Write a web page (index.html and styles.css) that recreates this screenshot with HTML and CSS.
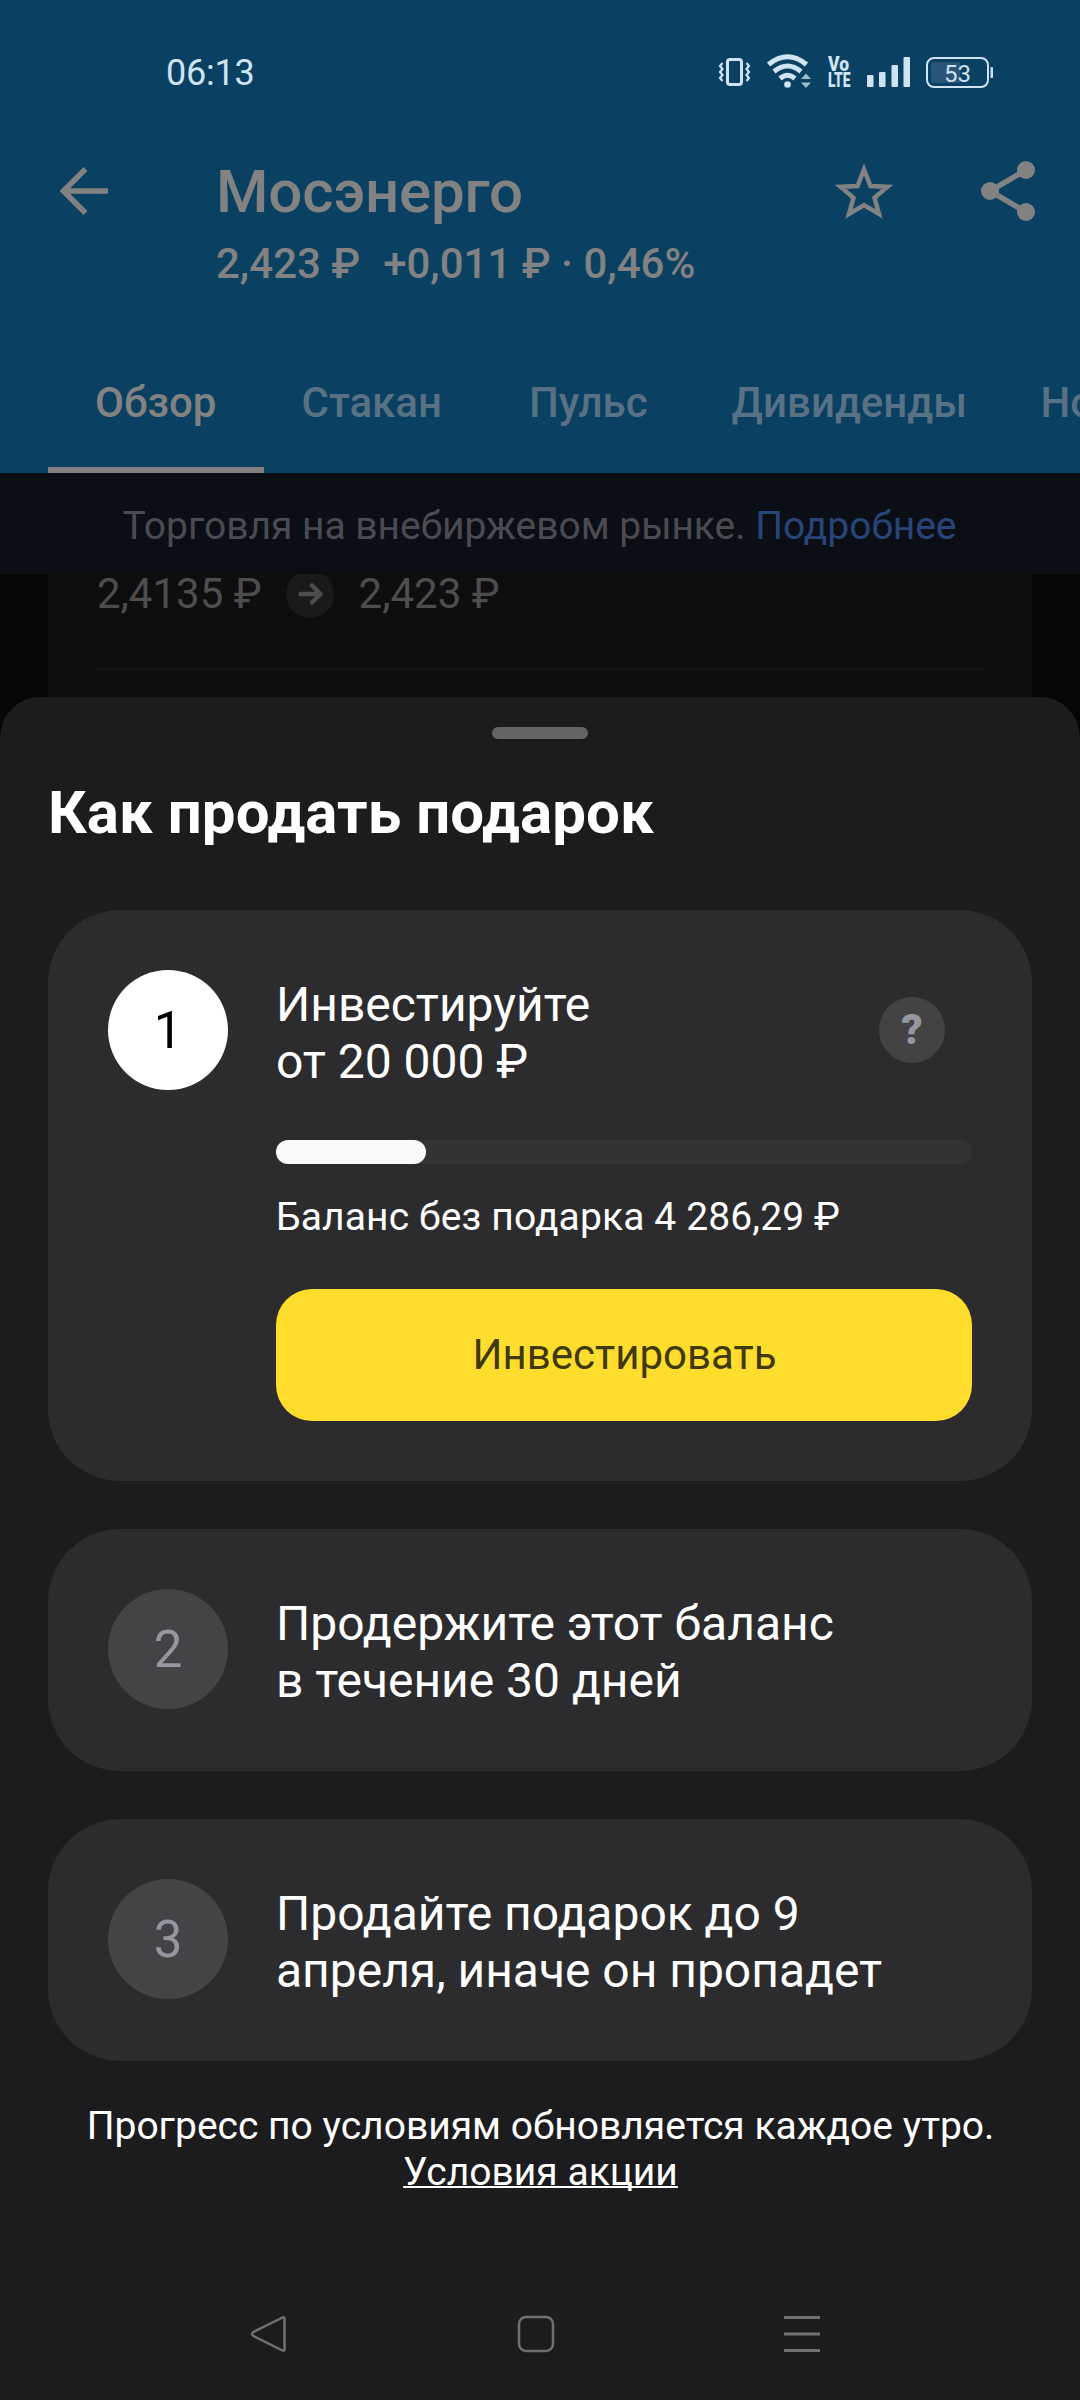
FILE: index.html
```html
<!DOCTYPE html>
<html lang="ru">
<head>
<meta charset="utf-8">
<title>Мосэнерго</title>
<link rel="stylesheet" href="styles.css">
</head>
<body>
<div class="screen">
  <header class="header">
    <div class="status">
      <span class="time">06:13</span>
      <svg class="status-icons" width="280" height="40" viewBox="716 52 280 40" fill="#cfe3f3">
        <g fill="none" stroke="#cfe3f3">
          <rect x="727.5" y="59.5" width="14" height="25" rx="2.5" stroke-width="3"/>
          <path d="M722.5 63l-2.500 3 2.500 3-2.500 3 2.500 3-2.500 3 2.500 3M746.500 63l2.500 3-2.500 3 2.500 3-2.500 3 2.500 3-2.500 3" stroke-width="2.200"/>
          <path d="M768.500 64.500q19-15.500 38 0M774 71.500q13.500-11 27 0M780 78.500q7.500-6.500 15 0" stroke-width="5"/>
        </g>
        <circle cx="787.500" cy="84.500" r="3.300"/>
        <path d="M801 79l5-5.500 5 5.500zM801 82.500h10l-5 5.500z" opacity=".75"/>
        <text class="volte" x="828" y="71" textLength="21" lengthAdjust="spacingAndGlyphs">Vo</text>
        <text class="volte" x="828" y="87" textLength="22.500" lengthAdjust="spacingAndGlyphs">LTE</text>
        <rect x="867" y="75" width="6.500" height="12" rx="1"/>
        <rect x="879" y="72" width="6.500" height="15" rx="1"/>
        <rect x="891.500" y="65" width="6.500" height="22" rx="1"/>
        <rect x="903.500" y="57" width="6.500" height="30" rx="1"/>
        <rect x="927" y="58" width="61" height="29" rx="7" fill="none" stroke="#cfe3f3" stroke-width="2"/>
        <path d="M934 62h26v21h-26q-3 0-3-3v-15q0-3 3-3z" fill="#285578"/>
        <rect x="990.500" y="67" width="2.500" height="11" rx="1"/>
        <text class="battery" x="957.500" y="81.500" text-anchor="middle">53</text>
      </svg>
    </div>
    <div class="toolbar">
      <svg class="back" width="48" height="48" viewBox="0 0 48 48" fill="none" stroke="#828282" stroke-width="5.500"><path d="M48 24H4M25.500 2l-22 22 22 22"/></svg>
      <div class="names">
        <h1 class="name">Мосэнерго</h1>
        <p class="quote"><span>2,423 ₽</span><span>+0,011 ₽ · 0,46%</span></p>
      </div>
      <svg class="star" width="60" height="58" viewBox="0 0 60 58" fill="none" stroke="#828282" stroke-width="4.500"><path d="M30 7.500l6.500 16.500 17 .8-13 11 4.500 16.200L30 43 15 52l4.500-16.200-13-11 17-.8z"/></svg>
      <svg class="share" width="56" height="62" viewBox="0 0 56 62" fill="#828282"><path d="M45 10L9 31l36 21" fill="none" stroke="#828282" stroke-width="5.500"/><circle cx="45" cy="10" r="9"/><circle cx="9" cy="31" r="9"/><circle cx="45" cy="52" r="9"/></svg>
    </div>
    <nav class="tabs">
      <span class="tab active">Обзор</span>
      <span class="tab">Стакан</span>
      <span class="tab">Пульс</span>
      <span class="tab wide">Дивиденды</span>
      <span class="tab last">Новости</span>
    </nav>
  </header>
  <div class="banner">Торговля на внебиржевом рынке.&nbsp;<a class="more">Подробнее</a></div>
  <main class="content">
    <div class="deal">
      <div class="prices">
        <span>2,4135 ₽</span>
        <svg width="48" height="48" viewBox="0 0 48 48"><circle cx="24" cy="24" r="24" fill="#1a1a1b"/><path d="M14.500 24h20M26 15.500l8.500 8.500-8.500 8.500" fill="none" stroke="#4d4d4e" stroke-width="4.500" stroke-linecap="round" stroke-linejoin="round"/></svg>
        <span>2,423 ₽</span>
      </div>
    </div>
  </main>
  <section class="sheet">
    <div class="handle"></div>
    <h2 class="title">Как продать подарок</h2>
    <div class="steps">
      <article class="step">
        <span class="num current">1</span>
        <div class="body">
          <div class="head">
            <p class="text">Инвестируйте<br>от 20 000 ₽</p>
            <span class="help">?</span>
          </div>
          <div class="track"><div class="fill" style="width: 21.5%"></div></div>
          <p class="balance">Баланс без подарка 4 286,29 ₽</p>
          <button class="invest">Инвестировать</button>
        </div>
      </article>
      <article class="step">
        <span class="num">2</span>
        <p class="text">Продержите этот баланс<br>в течение 30 дней</p>
      </article>
      <article class="step">
        <span class="num">3</span>
        <p class="text">Продайте подарок до 9<br>апреля, иначе он пропадет</p>
      </article>
    </div>
    <p class="note">Прогресс по условиям обновляется каждое утро.<br><a class="terms">Условия акции</a></p>
    <div class="sysnav">
      <svg width="38" height="38" viewBox="0 0 38 38"><path d="M34.500 3.500v31q0 2-2 1L3.500 21q-3-2 0-4L32.500 2.500q2-1 2 1z"/></svg>
      <svg width="38" height="38" viewBox="0 0 38 38"><rect x="2" y="2" width="34" height="34" rx="7"/></svg>
      <svg width="38" height="38" viewBox="0 0 38 38"><path d="M1 2.500h36M1 19h36M1 35.500h36" stroke-width="3"/></svg>
    </div>
  </section>
</div>
</body>
</html>
```
FILE: styles.css
```css
* { box-sizing: border-box; margin: 0; padding: 0; }
body { background: #060606; font-family: Roboto, sans-serif; }
.screen { width: 1080px; height: 2400px; overflow: hidden; display: flex; flex-direction: column; }
svg { display: block; flex: none; }

.header { height: 473px; background: #0a4061; color: #828282; flex: none; }
.status { height: 146px; padding: 0 84px 0 166px; display: flex; align-items: center; justify-content: space-between; color: #cfe3f3; }
.time { font-size: 36px; letter-spacing: -.2px; }
.status-icons { margin-top: -2px; }
.volte { font-size: 19.5px; font-weight: 900; }
.battery { font-size: 24px; }

.toolbar { height: 186px; padding: 11px 43px 0 60px; display: flex; align-items: flex-start; }
.back { margin-top: 10px; }
.names { flex: 1; margin-left: 108px; }
.name { font-size: 60px; line-height: 70px; font-weight: 500; letter-spacing: -.15px; }
.quote { font-size: 42px; line-height: 50px; font-weight: 500; margin-top: 12px; display: flex; gap: 23px; }
.star { margin: 5px 87px 0 0; }
.share { margin: 3px 0 0; }

.tabs { height: 141px; padding-left: 48px; display: flex; overflow: hidden; font-size: 42px; font-weight: 500; color: #587184; }
.tab { flex: none; padding: 0 43.5px; line-height: 141px; }
.tab.active { color: #828282; padding: 0 47px; margin-right: -6px; width: 216px; box-shadow: inset 0 -6px #828282; }
.tab.wide { padding-left: 40.5px; }
.tab.last { padding-left: 30px; }

.banner { position: relative; z-index: 1; flex: none; height: 101px; padding: 4px 1px 0 0; background: #0b0e15; color: #4a4b50; font-size: 39px; letter-spacing: -.02px; display: flex; align-items: center; justify-content: center; white-space: nowrap; }
.more { color: #28457a; }

.content { flex: none; height: 169px; margin-top: -6px; padding: 0 48px; background: #060606; }
.deal { height: 100%; padding: 0 48px; background: #0e0e0e; }
.prices { height: 102px; padding: 2px 0 50px 1px; border-bottom: 2px solid #161616; display: flex; align-items: center; gap: 24.5px; font-size: 42px; line-height: 50px; color: #4d4d4e; }

.sheet { flex: 1; position: relative; margin-top: -40px; padding: 30px 48px 0; border-radius: 40px 40px 0 0; background: #1c1c1e; color: #fff; }
.handle { width: 96px; height: 12px; margin: 0 auto; border-radius: 6px; background: #646465; }
.title { margin: 39px 0 62px; font-size: 60px; line-height: 70px; font-weight: 700; letter-spacing: .06px; }
.steps { display: flex; flex-direction: column; gap: 48px; }
.step { display: flex; gap: 48px; padding: 60px 60px 60px; border-radius: 72px; background: #2c2c2e; min-height: 242px; }
.num { flex: none; width: 120px; height: 120px; border-radius: 50%; background: #444446; color: #9496a0; font-size: 51px; line-height: 121px; text-align: center; }
.num.current { background: #fff; color: #000; }
.body { flex: 1; }
.text { margin-top: 6px; font-size: 48px; line-height: 57px; letter-spacing: -.02px; }
.head { display: flex; justify-content: space-between; height: 120px; }
.help { width: 66px; height: 66px; margin: 27px 27px 0 0; border-radius: 50%; background: #434343; color: #9496a0; font-size: 42px; line-height: 66px; font-weight: 900; text-align: center; }
.track { height: 24px; margin-top: 50px; border-radius: 12px; background: #333333; }
.fill { height: 24px; border-radius: 12px; background: #f8f9fb; }
.balance { margin: 30px 0 49px; font-size: 39px; line-height: 46px; letter-spacing: .13px; }
.invest { display: block; width: 100%; height: 132px; padding: 0 0 1px 1px; border: 0; border-radius: 36px; background: #ffdd2d; color: #40380f; font: 42px Roboto, sans-serif; }
.note { margin: 42px -49px 0 -48px; font-size: 39px; line-height: 46px; text-align: center; }
.terms { text-decoration: underline; text-decoration-thickness: 2px; text-decoration-skip-ink: none; }
.sysnav { display: flex; justify-content: space-between; margin-top: 120px; padding: 0 211px 0 202px; fill: none; stroke: #707071; stroke-width: 2.500; }
```
